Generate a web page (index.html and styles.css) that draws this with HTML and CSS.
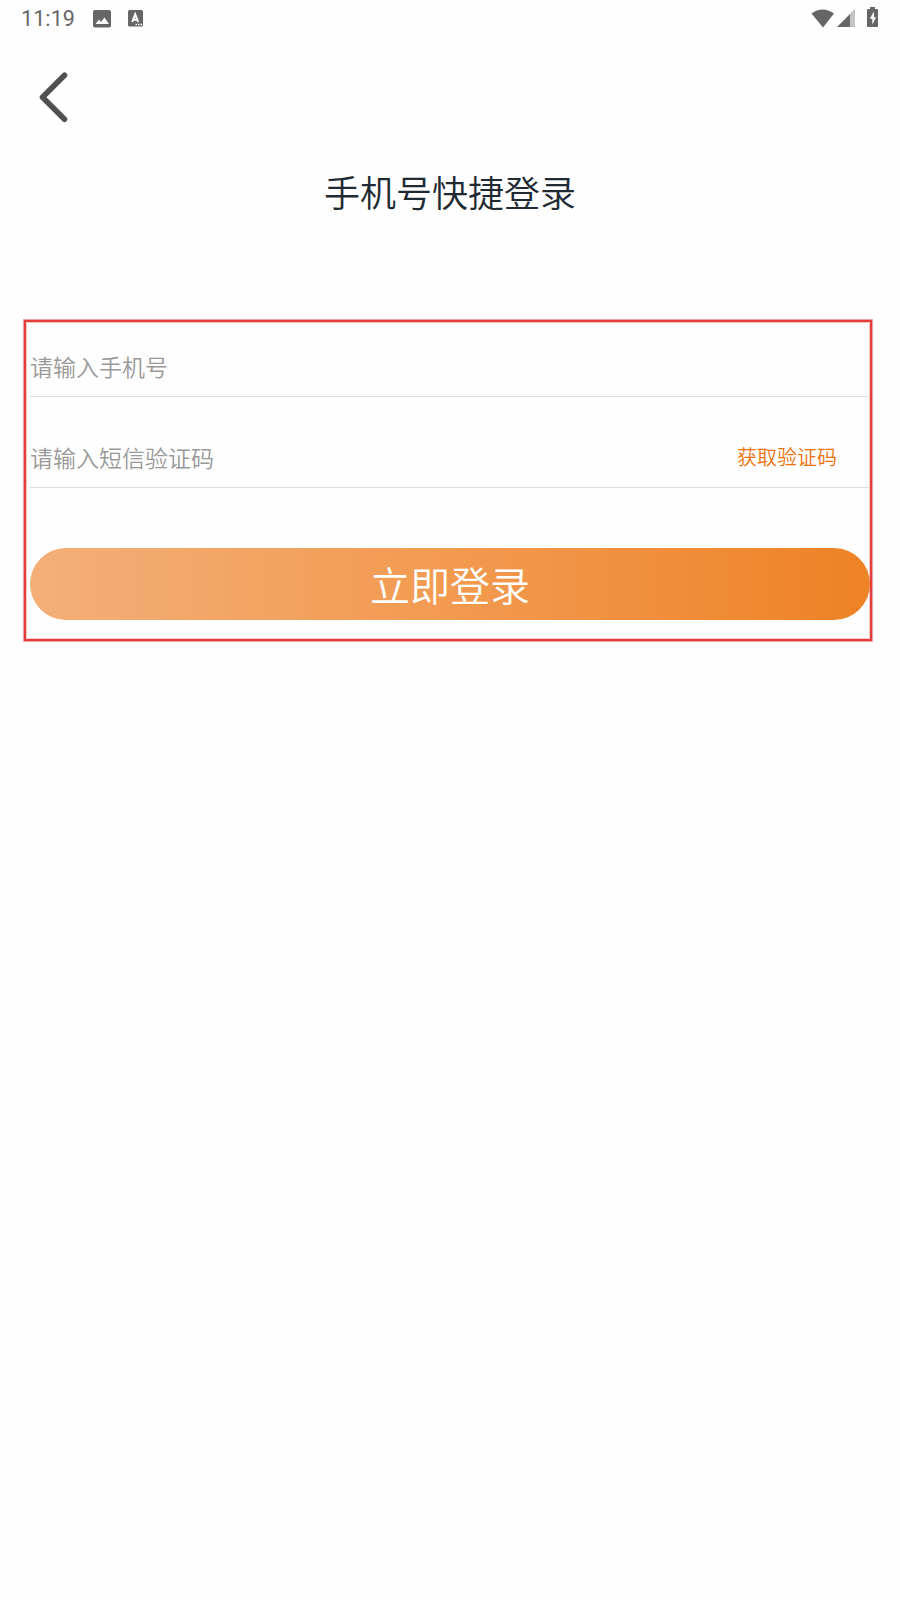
FILE: index.html
```html
<!DOCTYPE html>
<html lang="zh-CN">
<head>
    <meta charset="UTF-8">
    <meta name="viewport" content="width=device-width, initial-scale=1.0">
    <title>手机号快捷登录</title>
    <link rel="stylesheet" href="styles.css">
</head>
<body>

<!-- 状态栏 -->
<header class="status-bar">
    <span class="time">11:19</span>
    <svg class="icon-image" width="18" height="18" viewBox="0 0 18 18">
        <rect width="18" height="17.5" rx="2" fill="#666"/>
        <path d="M2.5 14l3.5-4.5 2 2.5 3.5-4.5 4.5 6.5z" fill="#fff"/>
    </svg>
    <svg class="icon-input" width="15" height="17" viewBox="0 0 15 17">
        <rect width="15" height="16.5" rx="1.5" fill="#666"/>
        <path d="M4.2 12L7.2 4.3L10.2 12M5.2 9.7h4" fill="none" stroke="#fff" stroke-width="2"/>
        <path d="M7.5 14.5h1.5M10 14.5h1.5M12.5 14.5h1.5" stroke="#fff" stroke-width="1.3"/>
    </svg>
    <div class="status-right">
        <svg width="24" height="20" viewBox="0 0 24 20">
            <path d="M0.5 4.6Q11.5-3.6 23 4.6L12 18.5z" fill="#666"/>
        </svg>
        <svg class="icon-signal" width="19" height="19" viewBox="0 0 19 19">
            <path d="M13 0H18V18H13z" fill="#c4c4c4"/>
            <path d="M0 0H18L0 18z" fill="#fefefe"/>
            <path d="M13 5L18 0V18H13z" fill="#c4c4c4"/>
            <path d="M0 18L13 5V18z" fill="#666"/>
        </svg>
        <svg class="icon-battery" width="12" height="20" viewBox="0 0 12 20">
            <path d="M3 0h5v2h2a1 1 0 0 1 1 1v16a1 1 0 0 1-1 1H1a1 1 0 0 1-1-1V3a1 1 0 0 1 1-1h2z" fill="#666"/>
            <path d="M6.9 4.6L2.8 11.8h2.5V17.6L9.2 10.2H6.9z" fill="#fff"/>
        </svg>
    </div>
</header>

<a class="back" href="#" aria-label="返回">
    <svg width="30" height="52" viewBox="0 0 30 52">
        <path d="M25.5 3.2L3.5 25.2L25.5 47.2" fill="none" stroke="#505050" stroke-width="5.6" stroke-linecap="round" stroke-linejoin="round"/>
    </svg>
</a>

<h1>手机号快捷登录</h1>

<form class="login-box">
    <div class="field">
        <input type="tel" placeholder="请输入手机号">
    </div>
    <div class="field field-code">
        <input type="text" placeholder="请输入短信验证码">
        <button type="button" class="get-code">获取验证码</button>
    </div>
    <button type="button" class="login-btn">立即登录</button>
</form>

</body>
</html>
```

FILE: styles.css
```css
* {
    box-sizing: border-box;
}
body {
    margin: 0;
    min-height: 1600px;
    background-color: #fefefe;
    font-family: "Noto Sans CJK SC", sans-serif;
    font-weight: 350;
}
input, button {
    padding: 0;
    border: 0;
    background: none;
    font-family: inherit;
    font-weight: inherit;
}
svg {
    display: block;
}
.status-bar {
    display: flex;
    align-items: center;
    height: 37px;
    padding: 0 21px 0 21px;
    color: #666;
}
.time {
    width: 72px;
    font-family: Roboto, sans-serif;
    font-size: 21.5px;
    font-weight: 400;
    letter-spacing: 0.1px;
}
.icon-input {
    margin-left: 17px;
}
.status-right {
    display: flex;
    align-items: center;
    margin-left: auto;
}
.icon-signal {
    margin-left: 2px;
}
.icon-battery {
    margin-left: 11px;
    margin-top: -3px;
}
.back {
    display: block;
    width: 30px;
    margin: 35px 0 0 39px;
}
h1 {
    margin: 40px 0 0;
    line-height: 54px;
    text-align: center;
    font-size: 36px;
    font-weight: inherit;
    color: #1f2a33;
}
.login-box {
    width: 848px;
    height: 321px;
    margin: 102px 0 0 24px;
    padding: 10px 0 0 4px;
    border: 2px solid #e83c3a;
    box-shadow: 0 0 0 1px #f3a3a1, inset 0 0 0 1px #f9c8c7;
}
.field {
    display: flex;
    align-items: center;
    height: 65px;
    padding-top: 3px;
    border-bottom: 1px solid #dcdcdc;
}
.field-code {
    height: 67px;
    margin-top: 24px;
    padding-top: 5px;
}
.field input {
    flex: 1;
    height: 40px;
    font-size: 23px;
    outline: none;
}
.field input::placeholder {
    color: #999;
}
.get-code {
    margin-right: 33px;
    font-size: 20px;
    color: #ed720c;
}
.login-btn {
    display: block;
    width: 100%;
    height: 72px;
    margin-top: 60px;
    border-radius: 36px;
    background: linear-gradient(to right, #f4af78, #f29a50 50%, #ee8226);
    font-size: 40px;
    color: #fff;
}
```
